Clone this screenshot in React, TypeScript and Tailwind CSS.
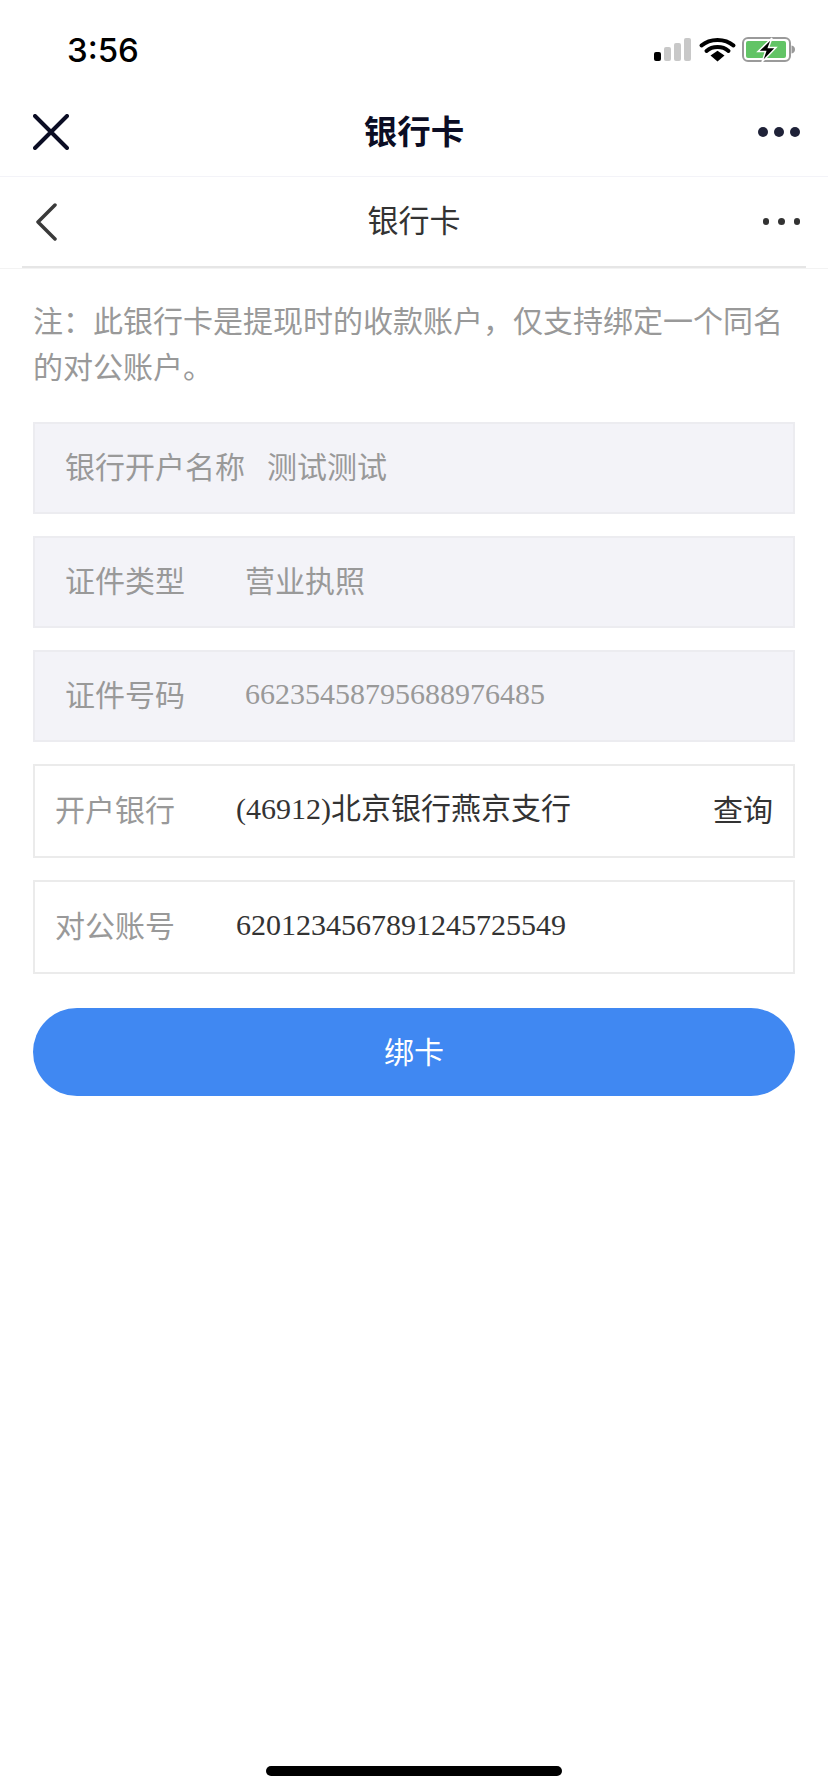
import React from "react";

const sans = "font-['Noto_Sans_CJK_SC',sans-serif]";
const mixed = "font-['Liberation_Serif','Noto_Sans_CJK_SC',serif]";

function StatusIcons() {
  return (
    <svg width="142" height="26" viewBox="0 0 142 26" fill="none">
      <rect x="0" y="15" width="7" height="9" rx="2" fill="#000" />
      <rect x="10" y="10" width="7" height="14" rx="2" fill="#c8c8c8" />
      <rect x="20" y="6" width="7" height="18" rx="2" fill="#c8c8c8" />
      <rect x="30" y="1" width="7" height="23" rx="2" fill="#c8c8c8" />
      <path d="M47.5 8.5C56 1 71 1 79.5 8.5" stroke="#000" strokeWidth="4" strokeLinecap="round" />
      <path d="M52.5 14C58.5 8.8 68.5 8.8 74.5 14" stroke="#000" strokeWidth="4" strokeLinecap="round" />
      <path d="M56.5 18.5L63.5 13.8L70.5 18.5L63.5 24.5Z" fill="#000" />
      <rect x="89" y="1" width="47" height="23" rx="5" stroke="#9a9a9a" strokeWidth="2" />
      <rect x="92" y="4" width="40" height="17" rx="2" fill="#62c466" />
      <path d="M137.5 8.5C140 9 141 10.5 141 12.5C141 14.5 140 16 137.5 16.5Z" fill="#9a9a9a" />
      <path d="M118 1L104 14.5H111.5L108 25L122 10.5H114.5Z" fill="#000" stroke="#fff" strokeWidth="1.5" />
    </svg>
  );
}

function Dots({ size, color }: { size: string; color: string }) {
  return (
    <div className={`flex items-center ${size === "big" ? "gap-[6px]" : "gap-[9px]"}`}>
      {[0, 1, 2].map((i) => (
        <span
          key={i}
          className={`block rounded-full ${size === "big" ? "w-[10px] h-[10px]" : "w-[6.5px] h-[6.5px]"}`}
          style={{ backgroundColor: color }}
        />
      ))}
    </div>
  );
}

function ReadonlyRow({ label, value, gapClass, serif }: { label: string; value: string; gapClass: string; serif?: boolean }) {
  return (
    <div className="h-[92px] flex items-center bg-[#f3f3f8] border-2 border-[#ececf0] pl-[30px] pb-[5px] text-[30px] text-[#999999]">
      <span className={`${sans} whitespace-nowrap`}>{label}</span>
      <span className={`${serif ? mixed : sans} ${gapClass} whitespace-nowrap`}>{value}</span>
    </div>
  );
}

function InputRow({ label, value, action }: { label: string; value: string; action?: string }) {
  return (
    <div className="h-[94px] flex items-center bg-white border-2 border-[#ebebeb] pl-[20px] pr-[20px] pb-[5px] text-[30px]">
      <span className={`${sans} w-[181px] shrink-0 text-[#999999] whitespace-nowrap`}>{label}</span>
      <span className={`${mixed} flex-1 text-[#333333] whitespace-nowrap`}>{value}</span>
      {action && <span className={`${sans} text-[#333333]`}>{action}</span>}
    </div>
  );
}

export default function App() {
  return (
    <div className={`w-[828px] min-h-[1792px] flex flex-col bg-white ${sans}`}>
      {/* status bar */}
      <div className="h-[88px] shrink-0 flex items-start justify-between pl-[67px] pr-[32px] pt-[37px]">
        <span className="font-['Inter',sans-serif] text-[33px] leading-[26px] font-medium text-black">3:56</span>
        <StatusIcons />
      </div>

      {/* wechat nav */}
      <div className="h-[89px] shrink-0 flex items-center px-[28px] border-b border-[#f3f3f8]">
        <div className="flex-1">
          <svg className="block ml-[5px]" width="36" height="36" viewBox="0 0 36 36" fill="none">
            <path d="M2 2L34 34M34 2L2 34" stroke="#0b0d24" strokeWidth="4" strokeLinecap="round" />
          </svg>
        </div>
        <span className="text-[33.5px] font-bold text-[#0b0d24] leading-none pb-[4px]">银行卡</span>
        <div className="flex-1 flex justify-end">
          <Dots size="big" color="#1f2238" />
        </div>
      </div>

      {/* page nav */}
      <div className="h-[92px] shrink-0 border-b border-[#f3f3f3]">
        <div className="h-[91px] mx-[22px] flex items-center px-[6px] border-b-2 border-[#e6e6e6]">
          <div className="flex-1">
            <svg className="block ml-[7px]" width="22" height="38" viewBox="0 0 22 38" fill="none">
              <path d="M20 2L3 19L20 36" stroke="#3a3a3a" strokeWidth="3.5" strokeLinecap="round" strokeLinejoin="round" />
            </svg>
          </div>
          <span className="text-[31px] text-[#333333] leading-none pb-[6px]">银行卡</span>
          <div className="flex-1 flex justify-end">
            <Dots size="small" color="#333333" />
          </div>
        </div>
      </div>

      <div className="px-[33px] flex flex-col">
        <p className="mt-[27px] text-[30px] leading-[46px] text-[#999999] w-[762px]">
          注：此银行卡是提现时的收款账户，仅支持绑定一个同名的对公账户。
        </p>
        <div className="mt-[34px] flex flex-col gap-[22px]">
          <ReadonlyRow label="银行开户名称" value="测试测试" gapClass="ml-[22px]" />
          <ReadonlyRow label="证件类型" value="营业执照" gapClass="ml-[60px]" />
          <ReadonlyRow label="证件号码" value="66235458795688976485" gapClass="ml-[60px]" serif />
          <InputRow label="开户银行" value="(46912)北京银行燕京支行" action="查询" />
          <InputRow label="对公账号" value="6201234567891245725549" />
        </div>
        <button className="mt-[34px] h-[88px] pb-[4px] rounded-full bg-[#4088f2] text-white text-[30px]">绑卡</button>
      </div>

      <div className="mt-auto pb-[16px] flex justify-center">
        <div className="w-[296px] h-[10px] rounded-full bg-black" />
      </div>
    </div>
  );
}
